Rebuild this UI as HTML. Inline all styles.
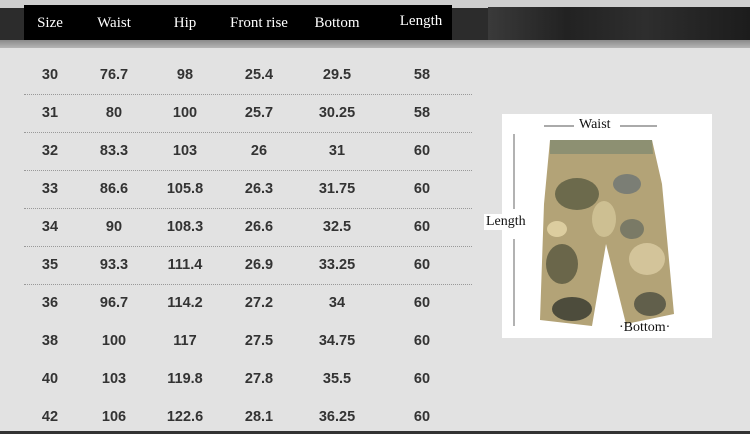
<!DOCTYPE html><html><head><meta charset="utf-8"><style>
body{margin:0;width:750px;height:434px;overflow:hidden;background:#e2e2e2;position:relative;font-family:"Liberation Sans",Arial,sans-serif}
.top{position:absolute;left:0;top:0;width:750px;height:8px;background:#cfcfcf}
.band{position:absolute;left:0;top:8px;width:750px;height:32px;background:#2c2c2c}
.strip{position:absolute;left:0;top:40px;width:750px;height:8px;background:linear-gradient(#8a8a8a,#b5b5b5)}
.hdr{position:absolute;left:24px;top:5px;width:428px;height:35px;background:#000}
.blur{position:absolute;left:488px;top:7px;width:262px;height:33px;background:linear-gradient(90deg,#3a3a3a,#222 30%,#2e2e2e 60%,#1c1c1c)}
.h{position:absolute;top:15px;color:#fff;font-family:"Liberation Serif",serif;font-size:15px;transform:translateX(-50%);white-space:nowrap}
.c{position:absolute;transform:translate(-50%,-50%);font-weight:bold;font-size:14.5px;color:#333}
.dl{position:absolute;left:24px;width:448px;border-top:1px dotted #999}
.bot{position:absolute;left:0;top:431px;width:750px;height:3px;background:#333}
.photo{position:absolute;left:502px;top:114px;width:210px;height:224px;background:#fff}
.lab{position:absolute;font-family:"Liberation Serif",serif;font-size:14px;color:#111;background:#fff}
</style></head><body>
<div class="top"></div><div class="band"></div><div class="strip"></div><div class="hdr"></div><div class="blur"></div>
<div class="h" style="left:50px">Size</div><div class="h" style="left:114px">Waist</div><div class="h" style="left:185px">Hip</div><div class="h" style="left:259px">Front rise</div><div class="h" style="left:337px">Bottom</div><div class="h" style="left:421px;top:13px">Length</div>
<div class="dl" style="top:94px"></div><div class="dl" style="top:132px"></div><div class="dl" style="top:170px"></div><div class="dl" style="top:208px"></div><div class="dl" style="top:246px"></div><div class="dl" style="top:284px"></div>
<div style="position:absolute;left:0;top:0">
<div class="c" style="left:50px;top:75px">30</div><div class="c" style="left:114px;top:75px">76.7</div><div class="c" style="left:185px;top:75px">98</div><div class="c" style="left:259px;top:75px">25.4</div><div class="c" style="left:337px;top:75px">29.5</div><div class="c" style="left:422px;top:75px">58</div>
<div class="c" style="left:50px;top:113px">31</div><div class="c" style="left:114px;top:113px">80</div><div class="c" style="left:185px;top:113px">100</div><div class="c" style="left:259px;top:113px">25.7</div><div class="c" style="left:337px;top:113px">30.25</div><div class="c" style="left:422px;top:113px">58</div>
<div class="c" style="left:50px;top:151px">32</div><div class="c" style="left:114px;top:151px">83.3</div><div class="c" style="left:185px;top:151px">103</div><div class="c" style="left:259px;top:151px">26</div><div class="c" style="left:337px;top:151px">31</div><div class="c" style="left:422px;top:151px">60</div>
<div class="c" style="left:50px;top:189px">33</div><div class="c" style="left:114px;top:189px">86.6</div><div class="c" style="left:185px;top:189px">105.8</div><div class="c" style="left:259px;top:189px">26.3</div><div class="c" style="left:337px;top:189px">31.75</div><div class="c" style="left:422px;top:189px">60</div>
<div class="c" style="left:50px;top:227px">34</div><div class="c" style="left:114px;top:227px">90</div><div class="c" style="left:185px;top:227px">108.3</div><div class="c" style="left:259px;top:227px">26.6</div><div class="c" style="left:337px;top:227px">32.5</div><div class="c" style="left:422px;top:227px">60</div>
<div class="c" style="left:50px;top:265px">35</div><div class="c" style="left:114px;top:265px">93.3</div><div class="c" style="left:185px;top:265px">111.4</div><div class="c" style="left:259px;top:265px">26.9</div><div class="c" style="left:337px;top:265px">33.25</div><div class="c" style="left:422px;top:265px">60</div>
<div class="c" style="left:50px;top:303px">36</div><div class="c" style="left:114px;top:303px">96.7</div><div class="c" style="left:185px;top:303px">114.2</div><div class="c" style="left:259px;top:303px">27.2</div><div class="c" style="left:337px;top:303px">34</div><div class="c" style="left:422px;top:303px">60</div>
<div class="c" style="left:50px;top:341px">38</div><div class="c" style="left:114px;top:341px">100</div><div class="c" style="left:185px;top:341px">117</div><div class="c" style="left:259px;top:341px">27.5</div><div class="c" style="left:337px;top:341px">34.75</div><div class="c" style="left:422px;top:341px">60</div>
<div class="c" style="left:50px;top:379px">40</div><div class="c" style="left:114px;top:379px">103</div><div class="c" style="left:185px;top:379px">119.8</div><div class="c" style="left:259px;top:379px">27.8</div><div class="c" style="left:337px;top:379px">35.5</div><div class="c" style="left:422px;top:379px">60</div>
<div class="c" style="left:50px;top:417px">42</div><div class="c" style="left:114px;top:417px">106</div><div class="c" style="left:185px;top:417px">122.6</div><div class="c" style="left:259px;top:417px">28.1</div><div class="c" style="left:337px;top:417px">36.25</div><div class="c" style="left:422px;top:417px">60</div>
</div>
<div class="photo"></div>
<svg style="position:absolute;left:502px;top:114px" width="210" height="224">
<line x1="42" y1="12" x2="72" y2="12" stroke="#555"/><line x1="118" y1="12" x2="155" y2="12" stroke="#555"/>
<line x1="12" y1="20" x2="12" y2="95" stroke="#666"/><line x1="12" y1="125" x2="12" y2="212" stroke="#666"/>
<path d="M48 26 L150 26 L160 70 L172 200 L124 210 L104 130 L90 212 L38 206 L42 90 Z" fill="#b3a377"/>
<path d="M48 26 L150 26 L151 40 L48 40Z" fill="#8d9072"/>
<ellipse cx="75" cy="80" rx="22" ry="16" fill="#6c6a4c"/><ellipse cx="125" cy="70" rx="14" ry="10" fill="#7b7e75"/>
<ellipse cx="60" cy="150" rx="16" ry="20" fill="#6a664a"/><ellipse cx="145" cy="145" rx="18" ry="16" fill="#d3c49a"/>
<ellipse cx="70" cy="195" rx="20" ry="12" fill="#4d4c3c"/><ellipse cx="148" cy="190" rx="16" ry="12" fill="#615f4b"/>
<ellipse cx="102" cy="105" rx="12" ry="18" fill="#cdbf92"/><ellipse cx="55" cy="115" rx="10" ry="8" fill="#dccd9f"/>
<ellipse cx="130" cy="115" rx="12" ry="10" fill="#7a7a66"/>
</svg>
<div class="lab" style="left:577px;top:117px;padding:0 2px">Waist</div>
<div class="lab" style="left:484px;top:214px;padding:0 2px">Length</div>
<div class="lab" style="left:617px;top:320px;padding:0 2px;background:transparent">·Bottom·</div>
<div class="bot"></div>
</body></html>
